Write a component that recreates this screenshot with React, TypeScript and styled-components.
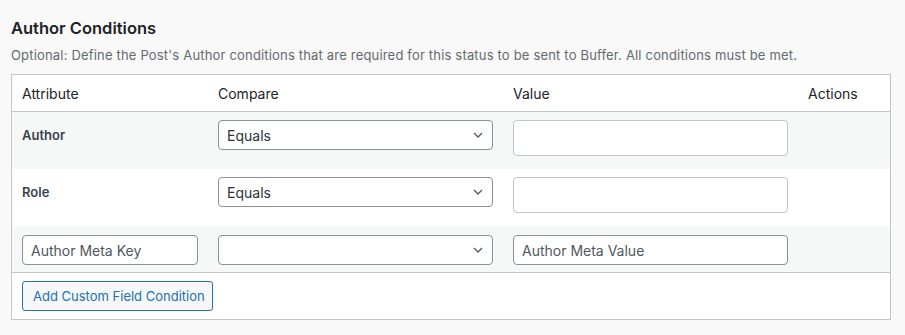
import React from "react";
import styled, { createGlobalStyle } from "styled-components";

const Global = createGlobalStyle`
  html, body { margin: 0; padding: 0; background: #f9f9f9; }
  body { font-family: Inter, "Noto Sans", sans-serif; color: #1d2327; }
  * { box-sizing: border-box; }
`;

const Page = styled.div`
  padding: 16px 15px 0 11px;
  width: 905px;
  height: 335px;
`;

const Title = styled.h2`
  margin: 0;
  font-size: 16.5px;
  font-weight: 600;
  line-height: 24px;
  color: #1d2327;
`;

const Desc = styled.p`
  margin: 5px 0 9px;
  font-size: 13px;
  letter-spacing: 0.18px;
  line-height: 20px;
  color: #646970;
`;

const Table = styled.div`
  width: 880px;
  border: 1px solid #c3c4c7;
  background: #fff;
`;

const Row = styled.div<{ $shade?: boolean; $h: number; $line?: boolean }>`
  display: grid;
  grid-template-columns: 196px 295px 295px 92px;
  height: ${(p) => p.$h}px;
  background: ${(p) => (p.$shade ? "#f6f7f7" : "#fff")};
  border-bottom: ${(p) => (p.$line ? "1px solid #c3c4c7" : "none")};
`;

const Cell = styled.div<{ $pt?: number }>`
  padding: ${(p) => p.$pt ?? 8}px 10px 0;
`;

const HeadCell = styled.div`
  padding: 0 10px;
  display: flex;
  align-items: center;
  font-size: 14px;
  color: #1d2327;
`;

const Label = styled.div`
  font-size: 13px;
  font-weight: 600;
  line-height: 30px;
  color: #3c434a;
`;

const SelectBox = styled.div`
  position: relative;
  height: 30px;
  border: 1px solid #8c8f94;
  border-radius: 4px;
  background: #fff;
  display: flex;
  align-items: center;
  padding: 0 24px 0 8px;
  font-size: 14px;
  color: #2c3338;
`;

const Chevron = styled.svg`
  position: absolute;
  right: 9px;
  top: 11px;
`;

const TextInput = styled.div<{ $tall?: boolean; $soft?: boolean }>`
  height: ${(p) => (p.$tall ? 36 : 30)}px;
  border: 1px solid ${(p) => (p.$soft ? "#c3c4c7" : "#8c8f94")};
  border-radius: 4px;
  background: #fff;
  display: flex;
  align-items: center;
  padding: 0 8px;
  font-size: 14px;
  color: #50575e;
`;

const Footer = styled.div`
  height: 46px;
  padding: 8px 10px;
`;

const Button = styled.button`
  height: 30px;
  width: 191px;
  padding: 0 10px;
  border: 1px solid #2271b1;
  border-radius: 3px;
  background: #f6f7f7;
  color: #2271b1;
  font-family: inherit;
  font-size: 13px;
  white-space: nowrap;
`;

const Select = ({ value }: { value?: string }) => (
  <SelectBox>
    {value}
    <Chevron width="10" height="6" viewBox="0 0 10 6">
      <path d="M1 1l4 4 4-4" fill="none" stroke="#50575e" strokeWidth="1.3" />
    </Chevron>
  </SelectBox>
);

export default function App() {
  return (
    <>
      <Global />
      <Page>
        <Title>Author Conditions</Title>
        <Desc>
          Optional: Define the Post's Author conditions that are required for this status to be sent to Buffer. All
          conditions must be met.
        </Desc>
        <Table>
          <Row $h={37} $line>
            <HeadCell>Attribute</HeadCell>
            <HeadCell>Compare</HeadCell>
            <HeadCell>Value</HeadCell>
            <HeadCell>Actions</HeadCell>
          </Row>
          <Row $h={57} $shade>
            <Cell>
              <Label>Author</Label>
            </Cell>
            <Cell>
              <Select value="Equals" />
            </Cell>
            <Cell>
              <TextInput $tall $soft />
            </Cell>
            <Cell />
          </Row>
          <Row $h={57}>
            <Cell>
              <Label>Role</Label>
            </Cell>
            <Cell>
              <Select value="Equals" />
            </Cell>
            <Cell>
              <TextInput $tall $soft />
            </Cell>
            <Cell />
          </Row>
          <Row $h={47} $shade $line>
            <Cell $pt={9}>
              <TextInput>Author Meta Key</TextInput>
            </Cell>
            <Cell $pt={9}>
              <Select />
            </Cell>
            <Cell $pt={9}>
              <TextInput>Author Meta Value</TextInput>
            </Cell>
            <Cell />
          </Row>
          <Footer>
            <Button>Add Custom Field Condition</Button>
          </Footer>
        </Table>
      </Page>
    </>
  );
}
